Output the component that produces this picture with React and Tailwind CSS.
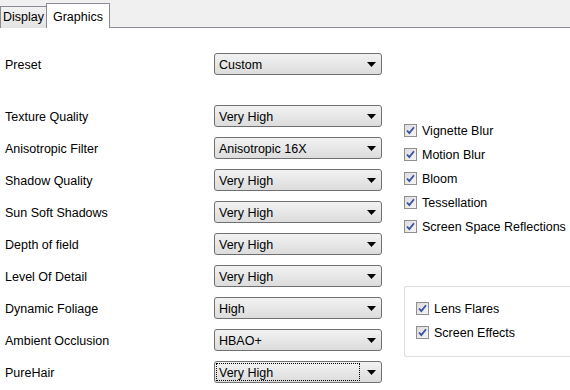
import React from 'react';

const rows = [
  { label: 'Texture Quality', value: 'Very High' },
  { label: 'Anisotropic Filter', value: 'Anisotropic 16X' },
  { label: 'Shadow Quality', value: 'Very High' },
  { label: 'Sun Soft Shadows', value: 'Very High' },
  { label: 'Depth of field', value: 'Very High' },
  { label: 'Level Of Detail', value: 'Very High' },
  { label: 'Dynamic Foliage', value: 'High' },
  { label: 'Ambient Occlusion', value: 'HBAO+' },
  { label: 'PureHair', value: 'Very High', focus: true },
];

const checks = ['Vignette Blur', 'Motion Blur', 'Bloom', 'Tessellation', 'Screen Space Reflections'];

const Combo = ({ value, focus }) => (
  <div className="w-[168px] h-[22px] rounded-[3px] border border-[#707070] bg-gradient-to-b from-[#f2f2f2] to-[#dcdcdc] flex items-center pl-[2px] pr-[5px]">
    <span className={`flex-1 h-[16px] leading-[19px] pl-[2px] ${focus ? 'outline outline-1 outline-dotted outline-black' : ''}`}>
      {value}
    </span>
    <svg width="9" height="5" viewBox="0 0 9 5" className="ml-[8px] shrink-0">
      <path d="M0 0H9L4.5 5Z" fill="#000" />
    </svg>
  </div>
);

const Check = ({ label }) => (
  <div className="flex items-center h-[24px] gap-[5px]">
    <div className="w-[13px] h-[13px] border border-[#8f8f8f] bg-gradient-to-br from-[#dcdcdc] to-[#f5f5f5] flex items-center justify-center">
      <svg width="9" height="9" viewBox="0 0 9 9">
        <path d="M1 4.5L3.3 7L8 1.2" fill="none" stroke="#3b4fa0" strokeWidth="1.8" />
      </svg>
    </div>
    <span className="pt-[2px]">{label}</span>
  </div>
);

export default function App() {
  return (
    <div className="w-[570px] h-[390px] bg-white text-[12.5px] text-black overflow-hidden" style={{ fontFamily: '"Liberation Sans", Arial, sans-serif' }}>
      <div className="h-[28px] bg-[#f0f0f0] border-b border-[#898c95] flex items-end">
        <div className="h-[22px] w-[47px] border border-b-0 border-[#898c95] bg-gradient-to-b from-[#f2f2f2] to-[#e3e3e3] flex items-center justify-center -mb-px">
          Display
        </div>
        <div className="h-[25px] w-[64px] -ml-px border border-b-0 border-[#898c95] bg-white flex items-start justify-center pt-[4px] -mb-px">
          Graphics
        </div>
      </div>
      <div className="flex">
        <div className="w-[214px] shrink-0 pl-[5px]">
          <div className="h-[22px] mt-[25px] pt-[2px] flex items-center">Preset</div>
          <div className="mt-[30px] flex flex-col gap-[10px]">
            {rows.map((r) => (
              <div key={r.label} className="h-[22px] pt-[2px] flex items-center">{r.label}</div>
            ))}
          </div>
        </div>
        <div className="shrink-0">
          <div className="mt-[25px]"><Combo value="Custom" /></div>
          <div className="mt-[30px] flex flex-col gap-[10px]">
            {rows.map((r) => (
              <Combo key={r.label} value={r.value} focus={r.focus} />
            ))}
          </div>
        </div>
        <div className="ml-[22px] flex-1">
          <div className="mt-[90px]">
            {checks.map((c) => <Check key={c} label={c} />)}
          </div>
          <div className="mt-[48px] h-[71px] border border-[#dcdfe3] border-r-0 rounded-l-[3px] pl-[11px] pt-[9px]">
            {['Lens Flares', 'Screen Effects'].map((c) => <Check key={c} label={c} />)}
          </div>
        </div>
      </div>
    </div>
  );
}
